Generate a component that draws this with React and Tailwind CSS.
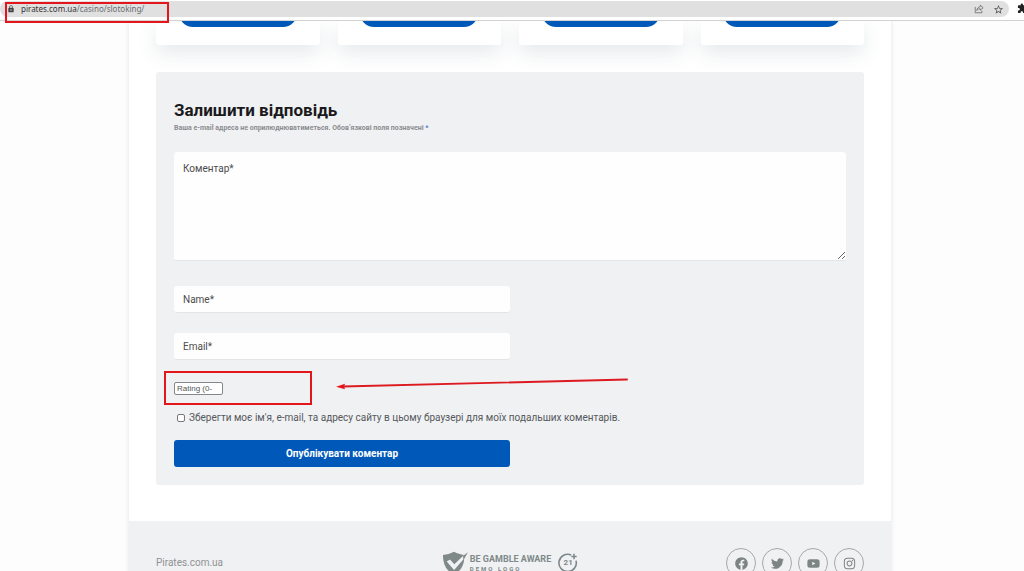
import React, { useState } from "react";
import { FaFacebook, FaTwitter, FaYoutube, FaInstagram } from "react-icons/fa";
import { MdExtension, MdLock, MdStarBorder } from "react-icons/md";

const cards = [1, 2, 3, 4];

const socials = [
  { name: "Facebook", Icon: FaFacebook },
  { name: "Twitter", Icon: FaTwitter },
  { name: "YouTube", Icon: FaYoutube },
  { name: "Instagram", Icon: FaInstagram },
];

const fieldClass =
  "block w-full rounded-[3px] border-b border-[#e3e4e6] bg-[#fefefe] px-[9px] text-[10px] text-[#333] placeholder:text-[#4c4c4c] placeholder:opacity-100 outline-none";

function ShareIcon() {
  return (
    <svg viewBox="0 0 12 12" className="h-[10px] w-[10px]" fill="none" stroke="currentColor" strokeLinejoin="round">
      <path d="M1.5 3.5V10.5H9.5V8" />
      <path d="M7.5 1.5L11 4.5L7.5 7.5V5.7C5.5 5.7 4.3 6.3 3.3 7.8C3.6 5.3 5 3.5 7.5 3.3Z" />
    </svg>
  );
}

function AddressBar() {
  return (
    <header className="relative flex h-[21px] shrink-0 items-start border-b border-[#d2d2d2] bg-white pt-px">
      <div className="flex h-4 flex-1 items-center rounded-full bg-[#e0e0e0] pr-[5px] pl-[7px] text-[#6a6d70]">
        <MdLock size={8} className="text-[#444]" />
        <span className="ml-[6px] font-['Noto_Sans'] text-[8px] leading-4">
          <span className="text-[#333]">pirates.com.ua</span>/casino/slotoking/
        </span>
        <div className="ml-auto flex items-center gap-[9px]">
          <button type="button" aria-label="Share">
            <ShareIcon />
          </button>
          <button type="button" aria-label="Bookmark">
            <MdStarBorder size={11} className="text-[#555]" />
          </button>
        </div>
      </div>
      <div className="mt-[2px] ml-2 w-[7px] shrink-0 overflow-hidden text-[#222]">
        <MdExtension size={11} className="max-w-none" />
      </div>
      <div className="absolute top-[2px] left-[5px] h-[21px] w-[164px] border-2 border-[#e3161b]"></div>
    </header>
  );
}

function CardRow() {
  return (
    <div className="grid grid-cols-4 gap-[18px]">
      {cards.map((card) => (
        <div
          key={card}
          className="flex h-6 items-end justify-center rounded-b-[3px] bg-white pb-[18px] shadow-[0_8px_20px_rgba(40,70,90,0.12)]"
        >
          <button type="button" aria-label="Грати" className="h-7 w-[118px] shrink-0 rounded-full bg-[#0059b9]"></button>
        </div>
      ))}
    </div>
  );
}

function CommentForm() {
  const [save, setSave] = useState(false);

  return (
    <form
      className="mt-[27px] rounded-[3px] bg-[#f0f1f3] px-[18px] pt-7 pb-[18px]"
      onSubmit={(e) => e.preventDefault()}
    >
      <h3 className="text-[17px] leading-5 font-bold text-[#1a1a1c]">Залишити відповідь</h3>
      <p className="mt-[2px] text-[7px] leading-3 font-bold text-[#8b8d90]">
        Ваша e-mail адреса не оприлюднюватиметься. Обов’язкові поля позначені{" "}
        <span className="text-[#5b83c4]">*</span>
      </p>
      <textarea
        aria-label="Коментар"
        placeholder="Коментар*"
        className={`${fieldClass} mt-[18px] h-[109px] resize-y pt-[11px] leading-3`}
      />
      <div className="w-1/2">
        <input type="text" aria-label="Name" placeholder="Name*" className={`${fieldClass} mt-[25px] h-[27px]`} />
        <input type="email" aria-label="Email" placeholder="Email*" className={`${fieldClass} mt-5 h-[27px]`} />
      </div>
      <div className="relative mt-[22px]">
        <input
          type="number"
          min="0"
          max="5"
          aria-label="Rating"
          placeholder="Rating (0-5)"
          className="block h-[13px] w-[49px] rounded-[2px] border border-[#85878a] bg-white pr-[10px] pl-[2px] font-['Liberation_Sans'] text-[8px] leading-3 [appearance:textfield] placeholder:text-[#555] placeholder:opacity-100 [&::-webkit-inner-spin-button]:appearance-none"
        />
        {/* highlight around the rating field */}
        <div className="absolute -top-[11px] -left-[10px] h-[34px] w-[148px] border-2 border-[#e3161b]"></div>
        <svg
          viewBox="0 0 292 14"
          className="absolute -top-[6px] left-[162px] h-[14px] w-[292px]"
          fill="none"
          aria-hidden="true"
        >
          <path d="M7 10.5L291 3.5" stroke="#dc1a20" strokeWidth="1.9" strokeLinecap="round" />
          <path d="M0 10.7L9 7.8L8 10.5L9 13.2Z" fill="#e3161b" />
        </svg>
      </div>
      <div className="mt-[15px] flex items-center pl-[3px]">
        <input
          id="save-data"
          type="checkbox"
          checked={save}
          onChange={(e) => setSave(e.target.checked)}
          className="h-2 w-2 appearance-none rounded-[2px] border border-[#76787b] bg-white checked:bg-[#0059b9]"
        />
        <label htmlFor="save-data" className="ml-1 text-[10px] leading-4 text-[#55585c]">
          Зберегти моє ім'я, e-mail, та адресу сайту в цьому браузері для моїх подальших коментарів.
        </label>
      </div>
      <button
        type="submit"
        className="mt-[14px] block h-[27px] w-1/2 rounded-[3px] bg-[#0059b9] text-[10px] font-bold text-white"
      >
        Опублікувати коментар
      </button>
    </form>
  );
}

function GambleLogo() {
  return (
    <div className="flex items-center text-[#7e8988]">
      <svg viewBox="0 0 26 24" className="h-6 w-[26px]" aria-hidden="true">
        <path
          d="M1 4C5 3.6 8 2.7 12 .8C15.5 2.5 18.5 3.4 22 3.9L12.3 13.3L8 8.4L4.7 10.6L12.1 19L22.2 7.5C22 14.5 18.5 20.5 12 23.5C4.5 20 1 13.5 1 4Z"
          fill="currentColor"
        />
        <path d="M21 5L26 1.2L21.5 9Z" fill="currentColor" />
      </svg>
      <div className="ml-[2px] whitespace-nowrap">
        <p className="text-[9px] leading-[11px] font-bold">BE GAMBLE AWARE</p>
        <p className="text-[6px] leading-2 font-bold tracking-[2px]">DEMO LOGO</p>
      </div>
      <div className="relative ml-[7px] flex h-5 w-5 items-center justify-center">
        <svg viewBox="0 0 20 20" className="absolute inset-0 h-full w-full" fill="none" stroke="currentColor" aria-hidden="true">
          <path d="M13.2 2A8.7 8.7 0 1 0 18 7.6" strokeWidth="1.6" />
          <path d="M16 .8V6.2M13.3 3.5H18.7" strokeWidth="1.5" />
        </svg>
        <span className="text-[8px] leading-3 font-bold">21</span>
      </div>
    </div>
  );
}

function Footer() {
  return (
    <footer className="mt-9 bg-[#f0f1f3] px-[27px] pt-[27px] pb-6">
      <div className="grid grid-cols-[1fr_auto_1fr] items-center">
        <p className="text-[10px] leading-4 text-[#8f9294]">Pirates.com.ua</p>
        <GambleLogo />
        <div className="flex justify-end gap-[6px]">
          {socials.map(({ name, Icon }) => (
            <a
              key={name}
              href="#"
              aria-label={name}
              className="flex h-[30px] w-[30px] items-center justify-center rounded-full border border-[#a4a8a9] text-[#7d8484]"
            >
              <Icon size={13} />
            </a>
          ))}
        </div>
      </div>
    </footer>
  );
}

function App() {
  return (
    <div className="flex h-screen flex-col overflow-hidden bg-[#fdfdfd] font-[Roboto,sans-serif]">
      <AddressBar />
      <div className="min-h-0 flex-1 overflow-hidden pr-1">
        <main className="mx-auto w-full max-w-[762px] bg-white shadow-[0_0_5px_rgba(0,0,0,0.1)]">
          <div className="px-[27px]">
            <CardRow />
            <CommentForm />
          </div>
          <Footer />
        </main>
      </div>
    </div>
  );
}

export default App;
